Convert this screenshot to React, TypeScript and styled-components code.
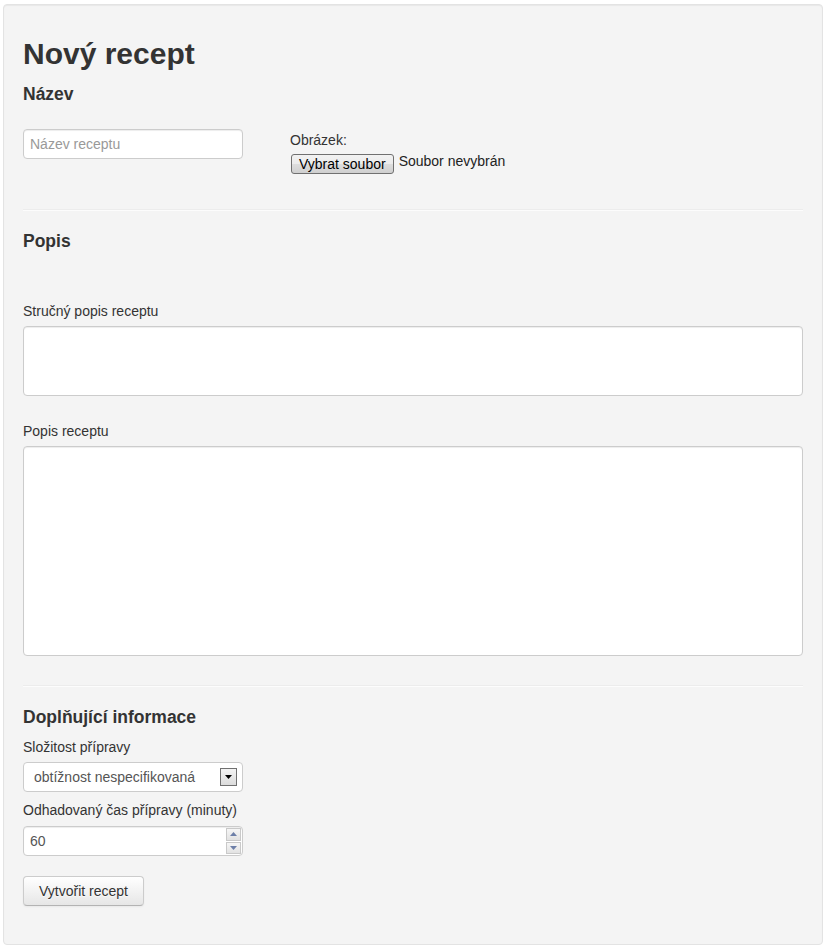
import React from "react";
import styled, { createGlobalStyle } from "styled-components";

const Global = createGlobalStyle`
  html, body { margin: 0; padding: 0; background: #fff; }
  body {
    font-family: "Liberation Sans", Arial, Helvetica, sans-serif;
    font-size: 14px;
    line-height: 20px;
    color: #333;
  }
  * { box-sizing: border-box; }
`;

const Page = styled.div`
  padding: 4px 7px 7px 3px;
`;

const Well = styled.form`
  background: #f4f4f4;
  border: 1px solid #e3e3e3;
  border-radius: 4px;
  box-shadow: inset 0 1px 1px rgba(0, 0, 0, 0.05);
  padding: 19px 19px 38px 19px;
`;

const Title = styled.h2`
  margin: 10px 0 0;
  font-size: 30px;
  line-height: 40px;
  font-weight: bold;
  color: #333;
`;

const SectionTitle = styled.h4<{ $top: number }>`
  margin: ${(p) => p.$top}px 0 0;
  font-size: 17.5px;
  line-height: 20px;
  font-weight: bold;
  color: #333;
`;

const TopRow = styled.div`
  display: grid;
  grid-template-columns: 267px 1fr;
  margin-top: 25px;
`;

const FileCol = styled.div`
  padding-top: 1px;
  display: flex;
  flex-direction: column;
`;

const Label = styled.label<{ $top?: number; $gap?: number }>`
  display: block;
  margin-top: ${(p) => p.$top ?? 0}px;
  margin-bottom: ${(p) => p.$gap ?? 5}px;
  line-height: 20px;
  font-size: 14px;
  color: #333;
`;

const TextInput = styled.input`
  display: block;
  width: 220px;
  height: 30px;
  padding: 4px 6px;
  font-family: inherit;
  font-size: 14px;
  line-height: 20px;
  color: #555;
  background: #fff;
  border: 1px solid #ccc;
  border-radius: 4px;
  box-shadow: inset 0 1px 1px rgba(0, 0, 0, 0.075);
  outline: none;
  &::placeholder { color: #999; }
`;

const FileRow = styled.div`
  display: flex;
  align-items: center;
  gap: 5px;
  height: 20px;
  padding-left: 1px;
`;

const FileButton = styled.button`
  height: 20px;
  padding: 0 7px;
  font-family: inherit;
  font-size: 14px;
  line-height: 18px;
  color: #000;
  border: 1px solid #707070;
  border-radius: 3px;
  background: linear-gradient(#f2f2f2 0%, #ebebeb 50%, #dddddd 51%, #cfcfcf 100%);
  cursor: default;
`;

const FileText = styled.span`
  font-size: 14px;
  color: #222;
  margin-top: -6px;
`;

const Divider = styled.hr<{ $top: number }>`
  margin: ${(p) => p.$top}px 0 20px;
  border: 0;
  border-top: 1px solid #ececec;
  border-bottom: 1px solid #fcfcfc;
  height: 0;
`;

const TextArea = styled.textarea<{ $h: number }>`
  display: block;
  width: 100%;
  height: ${(p) => p.$h}px;
  padding: 4px 6px;
  font-family: inherit;
  font-size: 14px;
  color: #555;
  background: #fff;
  border: 1px solid #ccc;
  border-radius: 4px;
  box-shadow: inset 0 1px 1px rgba(0, 0, 0, 0.075);
  resize: none;
  outline: none;
`;

const SelectBox = styled.div`
  width: 220px;
  height: 30px;
  background: #fff;
  border: 1px solid #ccc;
  border-radius: 4px;
  display: flex;
  align-items: center;
  justify-content: space-between;
  padding: 0 5px 0 10px;
  color: #555;
  font-size: 14px;
`;

const DropArrow = styled.div`
  width: 17px;
  height: 18px;
  border: 1px solid #707070;
  background: linear-gradient(#f4f4f4, #dcdcdc);
  display: flex;
  align-items: center;
  justify-content: center;
`;

const NumberBox = styled.div`
  width: 220px;
  height: 30px;
  background: #fff;
  border: 1px solid #ccc;
  border-radius: 4px;
  box-shadow: inset 0 1px 1px rgba(0, 0, 0, 0.075);
  display: flex;
  align-items: center;
  justify-content: space-between;
  padding: 0 1px 0 6px;
  color: #555;
  font-size: 14px;
`;

const Spinner = styled.div`
  width: 15px;
  height: 26px;
  display: flex;
  flex-direction: column;
  gap: 1px;
`;

const SpinBtn = styled.div`
  flex: 1;
  border: 1px solid #c9c9c9;
  background: linear-gradient(#f6f6f6, #e2e2e2);
  display: flex;
  align-items: center;
  justify-content: center;
`;

const Submit = styled.button`
  display: block;
  margin: 20px 0 0;
  height: 30px;
  padding: 4px 15px;
  font-family: inherit;
  font-size: 14px;
  line-height: 20px;
  color: #333;
  border: 1px solid #ccc;
  border-bottom-color: #b3b3b3;
  border-radius: 4px;
  background: linear-gradient(#ffffff, #e6e6e6);
  box-shadow: inset 0 1px 0 rgba(255, 255, 255, 0.2), 0 1px 2px rgba(0, 0, 0, 0.05);
  text-shadow: 0 1px 1px rgba(255, 255, 255, 0.75);
  cursor: pointer;
`;

const Tri = ({ up, color }: { up?: boolean; color: string }) => (
  <svg width="7" height="4" viewBox="0 0 7 4">
    <polygon points={up ? "0,4 7,4 3.5,0" : "0,0 7,0 3.5,4"} fill={color} />
  </svg>
);

export default function App() {
  return (
    <>
      <Global />
      <Page>
        <Well onSubmit={(e) => e.preventDefault()}>
          <Title>Nový recept</Title>
          <SectionTitle $top={10}>Název</SectionTitle>
          <TopRow>
            <div>
              <TextInput placeholder="Název receptu" />
            </div>
            <FileCol>
              <Label $gap={4}>Obrázek:</Label>
              <FileRow>
                <FileButton type="button">Vybrat soubor</FileButton>
                <FileText>Soubor nevybrán</FileText>
              </FileRow>
            </FileCol>
          </TopRow>
          <Divider $top={35} />
          <SectionTitle $top={0}>Popis</SectionTitle>
          <Label $top={50}>Stručný popis receptu</Label>
          <TextArea $h={70} />
          <Label $top={25}>Popis receptu</Label>
          <TextArea $h={210} />
          <Divider $top={29} />
          <SectionTitle $top={0}>Doplňující informace</SectionTitle>
          <Label $top={10}>Složitost přípravy</Label>
          <SelectBox>
            <span>obtížnost nespecifikovaná</span>
            <DropArrow>
              <Tri color="#000" />
            </DropArrow>
          </SelectBox>
          <Label $top={8} $gap={6}>Odhadovaný čas přípravy (minuty)</Label>
          <NumberBox>
            <span>60</span>
            <Spinner>
              <SpinBtn>
                <Tri up color="#6d7fa8" />
              </SpinBtn>
              <SpinBtn>
                <Tri color="#6d7fa8" />
              </SpinBtn>
            </Spinner>
          </NumberBox>
          <Submit type="submit">Vytvořit recept</Submit>
        </Well>
      </Page>
    </>
  );
}
